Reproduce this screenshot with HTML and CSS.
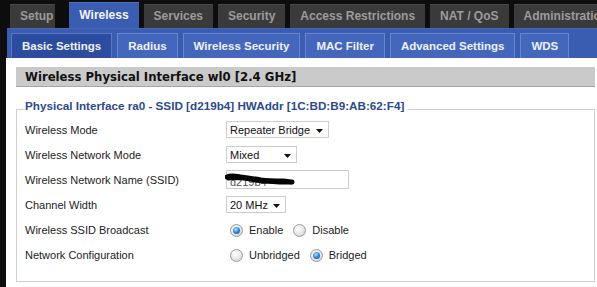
FILE: index.html
```html
<!DOCTYPE html>
<html>
<head>
<meta charset="utf-8">
<link rel="stylesheet" href="styles.css">
</head>
<body>
<div class="page">
  <div class="maintabs">
    <div class="mtab mtab-setup">Setup</div>
    <div class="mtab mtab-active">Wireless</div>
    <div class="mtab">Services</div>
    <div class="mtab">Security</div>
    <div class="mtab">Access Restrictions</div>
    <div class="mtab">NAT / QoS</div>
    <div class="mtab">Administration</div>
  </div>
  <div class="subbar">
    <div class="stab stab-active">Basic Settings</div>
    <div class="stab">Radius</div>
    <div class="stab">Wireless Security</div>
    <div class="stab">MAC Filter</div>
    <div class="stab">Advanced Settings</div>
    <div class="stab">WDS</div>
  </div>
  <div class="content">
    <div class="heading">Wireless Physical Interface wl0 [2.4 GHz]</div>
    <fieldset class="fs">
      <legend class="legend">Physical Interface ra0 - SSID [d219b4] HWAddr [1C:BD:B9:AB:62:F4]</legend>
      <div class="rows">
        <div class="row">
          <div class="label">Wireless Mode</div>
          <div class="select sel-mode"><span>Repeater Bridge</span><svg class="arrow" width="7" height="4" viewBox="0 0 7 4"><path d="M0 0H7L3.5 4Z" fill="#111"/></svg></div>
        </div>
        <div class="row">
          <div class="label">Wireless Network Mode</div>
          <div class="select sel-net"><span>Mixed</span><svg class="arrow" width="7" height="4" viewBox="0 0 7 4"><path d="M0 0H7L3.5 4Z" fill="#111"/></svg></div>
        </div>
        <div class="row">
          <div class="label">Wireless Network Name (SSID)</div>
          <div class="textbox"><span class="ssid">d219b4</span>
            <svg class="scribble" width="72" height="14" viewBox="0 0 72 14"><path d="M2 4 C6 2 10 3 16 4 C24 5 30 6 36 7 C44 8 52 8 58 8 C62 8 65 9 67 9" stroke="#050505" stroke-width="5" fill="none" stroke-linecap="round"/><path d="M3 6 C10 5 20 6 30 8 C40 9 50 10 60 10 C63 10 65 10 66 10" stroke="#050505" stroke-width="3" fill="none" stroke-linecap="round"/></svg>
          </div>
        </div>
        <div class="row">
          <div class="label">Channel Width</div>
          <div class="select sel-width"><span>20 MHz</span><svg class="arrow" width="7" height="4" viewBox="0 0 7 4"><path d="M0 0H7L3.5 4Z" fill="#111"/></svg></div>
        </div>
        <div class="row">
          <div class="label">Wireless SSID Broadcast</div>
          <div class="radios">
            <span class="radio checked"></span><span class="rlabel">Enable</span>
            <span class="radio"></span><span class="rlabel">Disable</span>
          </div>
        </div>
        <div class="row">
          <div class="label">Network Configuration</div>
          <div class="radios">
            <span class="radio"></span><span class="rlabel">Unbridged</span>
            <span class="radio checked"></span><span class="rlabel">Bridged</span>
          </div>
        </div>
      </div>
    </fieldset>
  </div>
</div>
</body>
</html>
```
FILE: styles.css
```css
html, body {
  margin: 0;
  padding: 0;
  background: #0d0d0d;
  width: 597px;
  height: 287px;
  overflow: hidden;
}
.page {
  font-family: "Liberation Sans", Arial, sans-serif;
}
.maintabs {
  display: flex;
  align-items: flex-end;
  padding: 4px 0 0 10px;
  height: 24px;
  white-space: nowrap;
  overflow: hidden;
}
.mtab {
  height: 23px;
  line-height: 23px;
  padding: 0 10px;
  margin-right: 5px;
  background: #3a3a3a;
  border-top: 1px solid #4a4a4a;
  color: #9c9c9c;
  font-weight: bold;
  font-size: 12px;
  flex: none;
}
.mtab-setup {
  padding: 0 2px 0 10px;
  margin-right: 14px;
}
.mtab-active {
  background: #3a5cb1;
  border-top: 1px solid #4d6fc2;
  color: #f2f4fa;
  height: 25px;
  line-height: 24px;
}
.subbar {
  margin-left: 7px;
  background: #3a5cb1;
  height: 30px;
  display: flex;
  align-items: flex-end;
  padding-left: 4px;
  gap: 5px;
  box-sizing: border-box;
  border-top: 1px solid #4667b8;
}
.stab {
  height: 24px;
  line-height: 24px;
  padding: 0 10px;
  background: #4467bd;
  border: 1px solid #6886cf;
  border-bottom: none;
  color: #eef1f8;
  font-weight: bold;
  font-size: 11.5px;
  white-space: nowrap;
}
.stab-active {
  background: #2c4d9f;
  border-color: #5a78c4;
}
.content {
  margin-left: 6px;
  background: #fff;
  height: 229px;
  padding: 9px 2px 0 10px;
  box-sizing: border-box;
}
.heading {
  height: 20px;
  line-height: 20px;
  background: #cacaca;
  border-bottom: 1px solid #a6a6a6;
  box-sizing: border-box;
  padding-left: 9px;
  font-family: "DejaVu Sans", Verdana, sans-serif;
  font-weight: bold;
  font-size: 11.7px;
  color: #111;
  white-space: nowrap;
}
.fs {
  margin: 12px 0 0 0;
  border: 1px solid #cfcfcf;
  padding: 0 8px 14px 8px;
  min-width: 0;
}
.legend {
  padding: 0 4px 8px 0;
  color: #2d4a8a;
  font-weight: bold;
  font-size: 11.7px;
  line-height: 13px;
  white-space: nowrap;
}
.rows {
  margin-top: -3px;
}
.row {
  display: flex;
  align-items: center;
  height: 25px;
  font-size: 11px;
  color: #222;
  white-space: nowrap;
}
.label {
  width: 201px;
  flex: none;
}
.select {
  display: flex;
  align-items: center;
  justify-content: space-between;
  height: 17px;
  box-sizing: border-box;
  border: 1px solid #cdcdcd;
  padding: 0 5px 0 3px;
  font-size: 11px;
  color: #111;
  background: #fff;
}
.sel-mode { width: 103px; }
.sel-net { width: 71px; }
.sel-width { width: 60px; }
.arrow { flex: none; margin-top: 2px; }
.textbox {
  position: relative;
  width: 123px;
  height: 19px;
  box-sizing: border-box;
  border: 1px solid #cdcdcd;
  padding: 0 3px;
  font-size: 11px;
  line-height: 19px;
  color: #555;
}
.ssid {
  display: inline-block;
  padding-top: 2px;
}
.scribble {
  position: absolute;
  left: -2px;
  top: 2px;
}
.radios {
  display: flex;
  align-items: center;
  padding-left: 4px;
}
.radio {
  width: 11px;
  height: 11px;
  border-radius: 50%;
  border: 1px solid #9a9a9a;
  background: radial-gradient(circle at 40% 35%, #ffffff 0%, #e6e6e6 55%, #c8c8c8 100%);
  flex: none;
  position: relative;
  margin-top: 1px;
}
.radio.checked::after {
  content: "";
  position: absolute;
  left: 2px;
  top: 2px;
  width: 7px;
  height: 7px;
  border-radius: 50%;
  background: radial-gradient(circle at 40% 35%, #b9e0ff 0%, #2d86d6 50%, #134c86 100%);
}
.rlabel {
  margin: 0 10px 0 6px;
  font-size: 11px;
}
```
